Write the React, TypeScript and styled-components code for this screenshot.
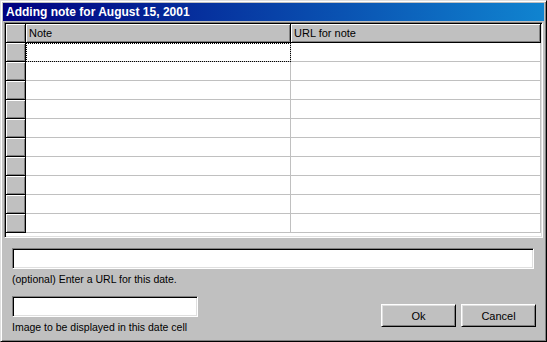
import React from 'react';
import styled, { createGlobalStyle } from 'styled-components';

const GlobalStyle = createGlobalStyle`
  html, body {
    margin: 0;
    padding: 0;
    background: #c0c0c0;
  }
  body {
    font-family: "Liberation Sans", Arial, sans-serif;
  }
`;

const Window = styled.div`
  width: 547px;
  height: 342px;
  box-sizing: border-box;
  background: #c0c0c0;
  border: 1px solid;
  border-color: #dfdfdf #000 #000 #dfdfdf;
  box-shadow: inset 1px 1px #fff, inset -1px -1px #808080;
  padding: 2px;
  display: flex;
  flex-direction: column;
`;

const TitleBar = styled.div`
  height: 18px;
  flex-shrink: 0;
  display: flex;
  align-items: center;
  padding-left: 3px;
  background: linear-gradient(to right, #000080, #1084d0);
  color: #fff;
  font-size: 12px;
  font-weight: bold;
  white-space: nowrap;
`;

const Grid = styled.div`
  margin: 1px 1px 0;
  height: 216px;
  box-sizing: border-box;
  padding: 1px;
  background: #fff;
  border: 1px solid;
  border-color: #808080 #fff #fff #808080;
  box-shadow: inset 1px 1px #000, inset -1px -1px #dfdfdf;
  display: grid;
  grid-template-columns: 20px 265px 250px;
  grid-auto-rows: 19px;
  align-content: start;
  overflow: hidden;
`;

const HeadCell = styled.div`
  box-sizing: border-box;
  background: #c0c0c0;
  border-right: 1px solid #000;
  border-bottom: 1px solid #000;
  box-shadow: inset 1px 1px #fff, inset -1px -1px #808080;
  font-size: 11px;
  line-height: 18px;
  padding-left: 3px;
  color: #000;
  white-space: nowrap;
`;

const Cell = styled.div<{ $focused?: boolean }>`
  box-sizing: border-box;
  background: #fff;
  border-right: 1px solid #c0c0c0;
  border-bottom: 1px solid #c0c0c0;
  outline: ${p => (p.$focused ? '1px dotted #000' : 'none')};
  outline-offset: -1px;
`;

const Footer = styled.div`
  padding: 0 8px 0 9px;
  display: flex;
  flex-direction: column;
`;

const Field = styled.input<{ $width?: number }>`
  display: block;
  box-sizing: border-box;
  width: ${p => (p.$width ? `${p.$width}px` : 'calc(100% - 2px)')};
  height: 21px;
  margin: 0;
  padding: 0 3px;
  background: #fff;
  border: 1px solid;
  border-color: #808080 #fff #fff #808080;
  box-shadow: inset 1px 1px #000, inset -1px -1px #dfdfdf;
  font-family: "Liberation Sans", Arial, sans-serif;
  font-size: 11px;
  outline: none;
`;

const UrlBlock = styled.div`
  margin-top: 10px;
`;

const Label = styled.div`
  margin-top: 4px;
  font-size: 10.5px;
  line-height: 13px;
  color: #000;
  white-space: nowrap;
`;

const BottomRow = styled.div`
  margin-top: 10px;
  display: flex;
  justify-content: space-between;
  align-items: flex-start;
`;

const Buttons = styled.div`
  margin-top: 8px;
  display: flex;
  gap: 5px;
`;

const Button = styled.button`
  width: 75px;
  height: 23px;
  box-sizing: border-box;
  margin: 0;
  padding: 0;
  background: #c0c0c0;
  border: 1px solid;
  border-color: #fff #000 #000 #fff;
  box-shadow: inset 1px 1px #dfdfdf, inset -1px -1px #808080;
  font-family: "Liberation Sans", Arial, sans-serif;
  font-size: 11px;
  color: #000;
`;

const ROWS = 10;

export default function App() {
  return (
    <>
      <GlobalStyle />
      <Window>
        <TitleBar>Adding note for August 15, 2001</TitleBar>
        <Grid>
          <HeadCell />
          <HeadCell>Note</HeadCell>
          <HeadCell>URL for note</HeadCell>
          {Array.from({ length: ROWS }).map((_, i) => (
            <React.Fragment key={i}>
              <HeadCell />
              <Cell $focused={i === 0} />
              <Cell />
            </React.Fragment>
          ))}
        </Grid>
        <Footer>
          <UrlBlock>
            <Field defaultValue="" />
            <Label>(optional) Enter a URL for this date.</Label>
          </UrlBlock>
          <BottomRow>
            <div>
              <Field $width={186} defaultValue="" />
              <Label>Image to be displayed in this date cell</Label>
            </div>
            <Buttons>
              <Button>Ok</Button>
              <Button>Cancel</Button>
            </Buttons>
          </BottomRow>
        </Footer>
      </Window>
    </>
  );
}
